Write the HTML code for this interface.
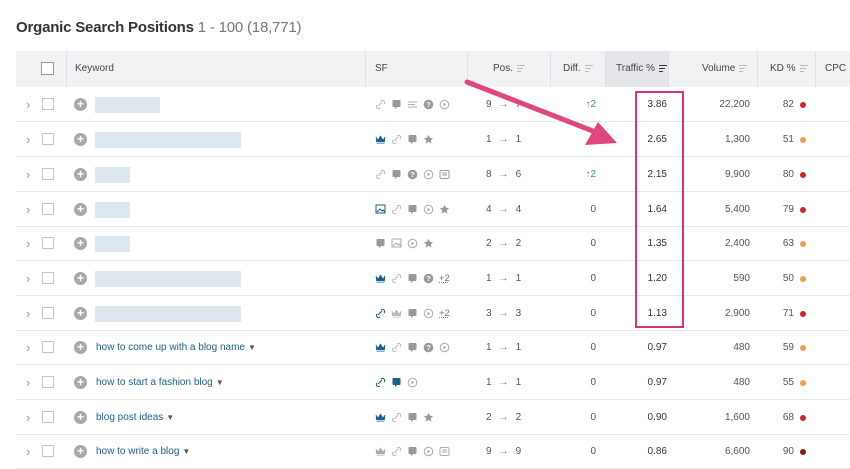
<!DOCTYPE html>
<html><head><meta charset="utf-8"><style>
*{margin:0;padding:0;box-sizing:border-box}
body{width:850px;height:458px;background:#fff;font-family:"Liberation Sans",sans-serif;position:relative;overflow:hidden;color:#333}
.title{position:absolute;left:16px;top:19px;font-size:15px;font-weight:bold;color:#333;letter-spacing:-.2px}
.title span{font-weight:normal;color:#777}
.hdr{position:absolute;left:16px;top:51px;width:834px;height:36px;background:#f1f2f4;font-size:10px;color:#444}
.hdr div{position:absolute;top:0;height:36px;line-height:36px;border-left:1px solid #e0e2e5}
.srt{display:inline-block;width:8px;height:7px;margin-left:4px;vertical-align:middle;background:linear-gradient(#bbb,#bbb) 0 0/8px 1px no-repeat,linear-gradient(#bbb,#bbb) 0 3px/6px 1px no-repeat,linear-gradient(#bbb,#bbb) 0 6px/4px 1px no-repeat}
.row{position:absolute;left:16px;width:834px;height:35px;border-bottom:1px solid #e6e7ea;font-size:10px;color:#555}
.row>*{position:absolute;top:0;line-height:35px}
.chev{left:10px;color:#999;font-size:13px}
.cb{left:26px;top:11px!important;width:12px;height:12px;border:1px solid #c6c6c6;background:#fff;line-height:0!important}
.plus{left:58px;top:11px!important;width:13px;height:13px;border-radius:50%;background:#a8a8a8;color:#fff;font-size:12px;font-weight:bold;line-height:13px!important;text-align:center}
.kw{left:80px;color:#1d5f86;font-size:10px}
.kw b{font-weight:normal;color:#555;font-size:8px;margin-left:3px}
.blur{position:absolute;left:79px;top:10px;height:16px;background:#dde7ef;line-height:0}
.sf{left:359px;top:12px!important;line-height:0!important;display:flex;gap:5px;align-items:center}
.pos{left:470px;width:80px}
.pos i{font-style:normal;color:#777;margin:0 7px}
.diff{left:530px;width:50px;text-align:right}
.up{color:#3a9a4d}
.tr{left:589px;width:62px;text-align:right;color:#333}
.vol{left:651px;width:83px;text-align:right}
.kd{left:740px;width:38px;text-align:right}
.dot{left:784px;top:15px!important;width:6px;height:6px;border-radius:50%;line-height:0!important}
.plus2{font-size:9.5px;color:#777;text-decoration:underline dotted;line-height:10px}
</style></head><body>
<div class="title">Organic Search Positions <span>1 - 100 (18,771)</span></div>
<div class="hdr">
<div style="left:0;width:50px;border:none"><span style="position:absolute;left:25px;top:11px;width:13px;height:13px;border:1px solid #999;background:#fff"></span></div>
<div style="left:50px;width:299px;padding-left:8px">Keyword</div>
<div style="left:349px;width:102px;padding-left:9px">SF</div>
<div style="left:451px;width:83px;padding-left:25px">Pos.<span class="srt"></span></div>
<div style="left:534px;width:55px;padding-left:12px">Diff.<span class="srt"></span></div>
<div style="left:589px;width:63px;padding-left:10px;background:#e4e6e9">Traffic %<span class="srt" style="filter:brightness(.3)"></span></div>
<div style="left:652px;width:89px;padding-left:33px">Volume<span class="srt"></span></div>
<div style="left:741px;width:58px;padding-left:12px">KD %<span class="srt"></span></div>
<div style="left:799px;width:40px;padding-left:9px">CPC</div>
</div>
<svg width="0" height="0" style="position:absolute"><defs>
<g id="lk"><path d="M3 7 L7 3 M2 6 a2 2 0 0 0 3 3 M6 2 a2 2 0 0 1 3 3" stroke="currentColor" stroke-width="1.1" fill="none"/></g>
<g id="cr"><path d="M1 3 L3 6 L5.5 2 L8 6 L10 3 L9.5 8 L1.5 8Z M1.5 9.5h8" fill="currentColor" stroke="currentColor" stroke-width=".6"/></g>
<g id="bx"><rect x="1.5" y="1" width="8" height="7" rx="1" fill="currentColor"/><path d="M4 8v2l2-2" fill="currentColor"/></g>
<g id="pl"><circle cx="5.5" cy="5.5" r="4.3" fill="none" stroke="currentColor"/><path d="M4.5 3.8v3.4l2.8-1.7z" fill="currentColor"/></g>
<g id="st"><path d="M5.5 .8l1.4 3 3.2.3-2.4 2.2.7 3.2-2.9-1.7-2.9 1.7.7-3.2L.9 4.1l3.2-.3z" fill="currentColor"/></g>
<g id="qu"><circle cx="5.5" cy="5.5" r="4.8" fill="currentColor"/><text x="5.5" y="8.2" font-size="7.5" fill="#fff" text-anchor="middle" font-family="Liberation Sans" font-weight="bold">?</text></g>
<g id="im"><rect x="1" y="1" width="9" height="8" fill="none" stroke="currentColor"/><path d="M2 8l3-3 2 2 1-1 2 2" stroke="currentColor" fill="none"/></g>
<g id="nw"><rect x="1" y="1.5" width="9" height="8" rx="1.5" fill="none" stroke="currentColor"/><path d="M3 4h5M3 6h5" stroke="currentColor"/></g>
<g id="fl"><path d="M1 3h9M1 5.5h7M1 8h9" stroke="currentColor" stroke-width="1.1"/></g>
</defs></svg>

<div class="row" style="top:87px"><span class="chev">›</span><span class="cb"></span><span class="plus">+</span><span class="blur" style="width:65px"></span>
<span class="sf"><svg width="11" height="11" style="color:#bbb"><use href="#lk"/></svg><svg width="11" height="11" style="color:#999"><use href="#bx"/></svg><svg width="11" height="11" style="color:#aaa"><use href="#fl"/></svg><svg width="11" height="11" style="color:#999"><use href="#qu"/></svg><svg width="11" height="11" style="color:#aaa"><use href="#pl"/></svg></span>
<span class="pos">9<i>→</i>7</span><span class="diff up">↑2</span><span class="tr">3.86</span><span class="vol">22,200</span><span class="kd">82</span><span class="dot" style="background:#c9262e"></span></div>

<div class="row" style="top:122px"><span class="chev">›</span><span class="cb"></span><span class="plus">+</span><span class="blur" style="width:146px"></span>
<span class="sf"><svg width="11" height="11" style="color:#1d5f86"><use href="#cr"/></svg><svg width="11" height="11" style="color:#bbb"><use href="#lk"/></svg><svg width="11" height="11" style="color:#999"><use href="#bx"/></svg><svg width="11" height="11" style="color:#999"><use href="#st"/></svg></span>
<span class="pos">1<i>→</i>1</span><span class="diff">0</span><span class="tr">2.65</span><span class="vol">1,300</span><span class="kd">51</span><span class="dot" style="background:#e8a04a"></span></div>

<div class="row" style="top:157px"><span class="chev">›</span><span class="cb"></span><span class="plus">+</span><span class="blur" style="width:35px"></span>
<span class="sf"><svg width="11" height="11" style="color:#bbb"><use href="#lk"/></svg><svg width="11" height="11" style="color:#999"><use href="#bx"/></svg><svg width="11" height="11" style="color:#999"><use href="#qu"/></svg><svg width="11" height="11" style="color:#aaa"><use href="#pl"/></svg><svg width="11" height="11" style="color:#999"><use href="#nw"/></svg></span>
<span class="pos">8<i>→</i>6</span><span class="diff up">↑2</span><span class="tr">2.15</span><span class="vol">9,900</span><span class="kd">80</span><span class="dot" style="background:#c9262e"></span></div>

<div class="row" style="top:192px"><span class="chev">›</span><span class="cb"></span><span class="plus">+</span><span class="blur" style="width:35px"></span>
<span class="sf"><svg width="11" height="11" style="color:#1d5f86"><use href="#im"/></svg><svg width="11" height="11" style="color:#bbb"><use href="#lk"/></svg><svg width="11" height="11" style="color:#999"><use href="#bx"/></svg><svg width="11" height="11" style="color:#aaa"><use href="#pl"/></svg><svg width="11" height="11" style="color:#999"><use href="#st"/></svg></span>
<span class="pos">4<i>→</i>4</span><span class="diff">0</span><span class="tr">1.64</span><span class="vol">5,400</span><span class="kd">79</span><span class="dot" style="background:#c9262e"></span></div>

<div class="row" style="top:226px"><span class="chev">›</span><span class="cb"></span><span class="plus">+</span><span class="blur" style="width:35px"></span>
<span class="sf"><svg width="11" height="11" style="color:#999"><use href="#bx"/></svg><svg width="11" height="11" style="color:#aaa"><use href="#im"/></svg><svg width="11" height="11" style="color:#aaa"><use href="#pl"/></svg><svg width="11" height="11" style="color:#999"><use href="#st"/></svg></span>
<span class="pos">2<i>→</i>2</span><span class="diff">0</span><span class="tr">1.35</span><span class="vol">2,400</span><span class="kd">63</span><span class="dot" style="background:#e8a04a"></span></div>

<div class="row" style="top:261px"><span class="chev">›</span><span class="cb"></span><span class="plus">+</span><span class="blur" style="width:146px"></span>
<span class="sf"><svg width="11" height="11" style="color:#1d5f86"><use href="#cr"/></svg><svg width="11" height="11" style="color:#bbb"><use href="#lk"/></svg><svg width="11" height="11" style="color:#999"><use href="#bx"/></svg><svg width="11" height="11" style="color:#999"><use href="#qu"/></svg><span class="plus2">+2</span></span>
<span class="pos">1<i>→</i>1</span><span class="diff">0</span><span class="tr">1.20</span><span class="vol">590</span><span class="kd">50</span><span class="dot" style="background:#e8a04a"></span></div>

<div class="row" style="top:296px"><span class="chev">›</span><span class="cb"></span><span class="plus">+</span><span class="blur" style="width:146px"></span>
<span class="sf"><svg width="11" height="11" style="color:#1d5f86"><use href="#lk"/></svg><svg width="11" height="11" style="color:#bbb"><use href="#cr"/></svg><svg width="11" height="11" style="color:#999"><use href="#bx"/></svg><svg width="11" height="11" style="color:#aaa"><use href="#pl"/></svg><span class="plus2">+2</span></span>
<span class="pos">3<i>→</i>3</span><span class="diff">0</span><span class="tr">1.13</span><span class="vol">2,900</span><span class="kd">71</span><span class="dot" style="background:#c9262e"></span></div>

<div class="row" style="top:330px"><span class="chev">›</span><span class="cb"></span><span class="plus">+</span><span class="kw">how to come up with a blog name<b>▼</b></span>
<span class="sf"><svg width="11" height="11" style="color:#1d5f86"><use href="#cr"/></svg><svg width="11" height="11" style="color:#bbb"><use href="#lk"/></svg><svg width="11" height="11" style="color:#999"><use href="#bx"/></svg><svg width="11" height="11" style="color:#999"><use href="#qu"/></svg><svg width="11" height="11" style="color:#aaa"><use href="#pl"/></svg></span>
<span class="pos">1<i>→</i>1</span><span class="diff">0</span><span class="tr">0.97</span><span class="vol">480</span><span class="kd">59</span><span class="dot" style="background:#e8a04a"></span></div>

<div class="row" style="top:365px"><span class="chev">›</span><span class="cb"></span><span class="plus">+</span><span class="kw">how to start a fashion blog<b>▼</b></span>
<span class="sf"><svg width="11" height="11" style="color:#1d5f86"><use href="#lk"/></svg><svg width="11" height="11" style="color:#1d5f86"><use href="#bx"/></svg><svg width="11" height="11" style="color:#aaa"><use href="#pl"/></svg></span>
<span class="pos">1<i>→</i>1</span><span class="diff">0</span><span class="tr">0.97</span><span class="vol">480</span><span class="kd">55</span><span class="dot" style="background:#e8a04a"></span></div>

<div class="row" style="top:400px"><span class="chev">›</span><span class="cb"></span><span class="plus">+</span><span class="kw">blog post ideas<b>▼</b></span>
<span class="sf"><svg width="11" height="11" style="color:#1d5f86"><use href="#cr"/></svg><svg width="11" height="11" style="color:#bbb"><use href="#lk"/></svg><svg width="11" height="11" style="color:#999"><use href="#bx"/></svg><svg width="11" height="11" style="color:#999"><use href="#st"/></svg></span>
<span class="pos">2<i>→</i>2</span><span class="diff">0</span><span class="tr">0.90</span><span class="vol">1,600</span><span class="kd">68</span><span class="dot" style="background:#c9262e"></span></div>

<div class="row" style="top:434px"><span class="chev">›</span><span class="cb"></span><span class="plus">+</span><span class="kw">how to write a blog<b>▼</b></span>
<span class="sf"><svg width="11" height="11" style="color:#aaa"><use href="#cr"/></svg><svg width="11" height="11" style="color:#bbb"><use href="#lk"/></svg><svg width="11" height="11" style="color:#999"><use href="#bx"/></svg><svg width="11" height="11" style="color:#aaa"><use href="#pl"/></svg><svg width="11" height="11" style="color:#aaa"><use href="#nw"/></svg></span>
<span class="pos">9<i>→</i>9</span><span class="diff">0</span><span class="tr">0.86</span><span class="vol">6,600</span><span class="kd">90</span><span class="dot" style="background:#8b1a1a"></span></div>

<div style="position:absolute;left:635px;top:91px;width:49px;height:237px;border:2px solid #d0357a"></div>
<svg width="850" height="458" style="position:absolute;left:0;top:0">
<line x1="467" y1="82" x2="598" y2="133" stroke="#e0467f" stroke-width="5" stroke-linecap="round"/>
<path d="M617 143 L585 145 L598 122 Z" fill="#e0467f"/>
</svg>
</body></html>
